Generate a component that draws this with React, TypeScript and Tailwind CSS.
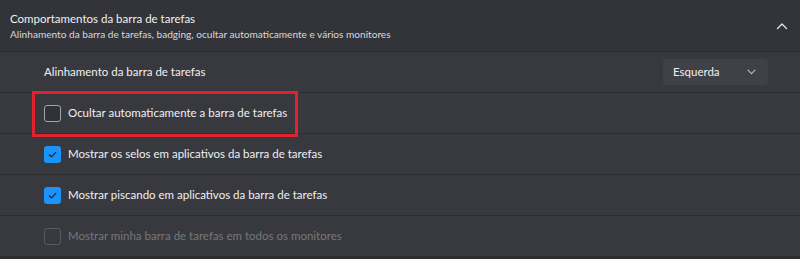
import React from "react";

const font = { fontFamily: 'Lato, "Noto Sans", sans-serif' };

function Check({ state }: { state: "on" | "off" | "disabled" }) {
  if (state === "on") {
    return (
      <div className="w-[17px] h-[17px] rounded-[3px] bg-[#1c93fb] flex items-center justify-center shrink-0">
        <svg width="11" height="11" viewBox="0 0 12 12" fill="none">
          <path d="M2.5 6.3 L4.9 8.6 L9.6 3.6" stroke="#1b2530" strokeWidth="1.3" strokeLinecap="round" strokeLinejoin="round" />
        </svg>
      </div>
    );
  }
  return (
    <div
      className={
        "w-[17px] h-[17px] rounded-[3px] border shrink-0 " +
        (state === "off" ? "border-[#a4a5aa] bg-[#313237]" : "border-[#5a5b60] bg-transparent")
      }
    />
  );
}

function Row({ label, state }: { label: string; state: "on" | "off" | "disabled" }) {
  return (
    <div className="h-[41px] bg-[#38393e] border-b border-[#2c2d31] flex items-center pl-[44px]">
      <Check state={state} />
      <span className={"ml-[7px] text-[11.5px] " + (state === "disabled" ? "text-[#76777b]" : "text-[#f0f0f2]")}>{label}</span>
    </div>
  );
}

export default function App() {
  return (
    <div className="w-[800px] h-[259px] bg-[#2c2d31] overflow-hidden" style={font}>
      <div className="h-[52px] bg-[#333439] flex items-center justify-between pl-[10px] pr-[12px] border-b border-[#2a2b2f]">
        <div className="flex flex-col">
          <span className="text-[11.5px] leading-[16px] text-[#f0f0f2]">Comportamentos da barra de tarefas</span>
          <span className="text-[10.1px] leading-[14px] text-[#d8d8db]">
            Alinhamento da barra de tarefas, badging, ocultar automaticamente e vários monitores
          </span>
        </div>
        <svg width="12" height="8" viewBox="0 0 12 8" fill="none" className="mt-[1px]">
          <path d="M1.5 6.5 L6 2 L10.5 6.5" stroke="#e6e6e8" strokeWidth="1.3" strokeLinecap="round" strokeLinejoin="round" />
        </svg>
      </div>
      <div className="h-[41px] bg-[#38393e] border-b border-[#2c2d31] flex items-center justify-between pl-[44px] pr-[32px]">
        <span className="text-[11.5px] text-[#f0f0f2]">Alinhamento da barra de tarefas</span>
        <div className="w-[105px] h-[26px] bg-[#404146] rounded-[4px] flex items-center justify-between pl-[10px] pr-[12px]">
          <span className="text-[11.5px] text-[#f0f0f2]">Esquerda</span>
          <svg width="9" height="6" viewBox="0 0 9 6" fill="none">
            <path d="M1 1.2 L4.5 4.7 L8 1.2" stroke="#b9babd" strokeWidth="1.2" strokeLinecap="round" strokeLinejoin="round" />
          </svg>
        </div>
      </div>
      <div className="relative">
        <Row label="Ocultar automaticamente a barra de tarefas" state="off" />
        <div className="absolute left-[32px] top-[-2px] w-[266px] h-[46px] border-[3px] border-[#e0222f] pointer-events-none" />
      </div>
      <Row label="Mostrar os selos em aplicativos da barra de tarefas" state="on" />
      <Row label="Mostrar piscando em aplicativos da barra de tarefas" state="on" />
      <Row label="Mostrar minha barra de tarefas em todos os monitores" state="disabled" />
    </div>
  );
}
